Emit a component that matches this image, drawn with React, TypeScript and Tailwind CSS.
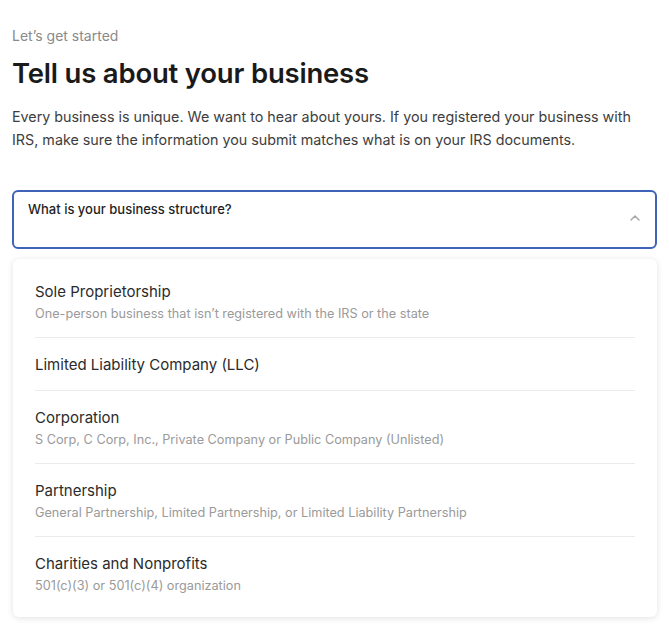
const OPTIONS = [
  {
    title: "Sole Proprietorship",
    description: "One-person business that isn’t registered with the IRS or the state",
  },
  { title: "Limited Liability Company (LLC)", description: "" },
  {
    title: "Corporation",
    description: "S Corp, C Corp, Inc., Private Company or Public Company (Unlisted)",
  },
  {
    title: "Partnership",
    description: "General Partnership, Limited Partnership, or Limited Liability Partnership",
  },
  {
    title: "Charities and Nonprofits",
    description: "501(c)(3) or 501(c)(4) organization",
  },
] as const;

export default function App() {
  return (
    <div className="min-h-screen bg-white px-3 pt-[27px] font-['Inter',sans-serif]">
      <p className="text-[14px] leading-[18px] text-[#8a8a8a]">Let’s get started</p>
      <h1 className="mt-[12px] text-[27.5px] font-semibold leading-[32px] tracking-[-0.2px] text-[#1a1a1a]">
        Tell us about your business
      </h1>
      <p className="mt-[16px] text-[14.3px] leading-[23px] text-[#3d3d3d]">
        Every business is unique. We want to hear about yours. If you registered your business with
        IRS, make sure the information you submit matches what is on your IRS documents.
      </p>

      <div className="mt-[39px] flex h-[59px] items-start justify-between rounded-[6px] border-2 border-[#3e63b8] pl-[14px] pr-[14px] pt-[8px]">
        <span className="text-[13px] font-medium leading-[18px] text-[#1f1f1f]">
          What is your business structure?
        </span>
        <svg
          className="mt-[14px]"
          width="12"
          height="8"
          viewBox="0 0 12 8"
          fill="none"
          stroke="#a8a8a8"
          strokeWidth="1.5"
          strokeLinecap="round"
          strokeLinejoin="round"
        >
          <path d="M2 6 L6 2 L10 6" />
        </svg>
      </div>

      <div className="ml-px mt-[10px] rounded-[6px] bg-white px-[22px] pb-[8px] pt-[6px] shadow-[0_1px_6px_rgba(0,0,0,0.12)]">
        {OPTIONS.map((option, i) => (
          <div
            key={option.title}
            className={`pt-[16px] ${option.description ? "pb-[13px]" : "pb-[15px]"} ${
              i < OPTIONS.length - 1 ? "border-b border-[#ebebeb]" : ""
            }`}
          >
            <p className="text-[15px] leading-[21px] text-[#2b2b2b]">{option.title}</p>
            {option.description && (
              <p className="mt-[2px] text-[12.7px] leading-[20px] text-[#9a9a9a]">{option.description}</p>
            )}
          </div>
        ))}
      </div>
    </div>
  );
}
